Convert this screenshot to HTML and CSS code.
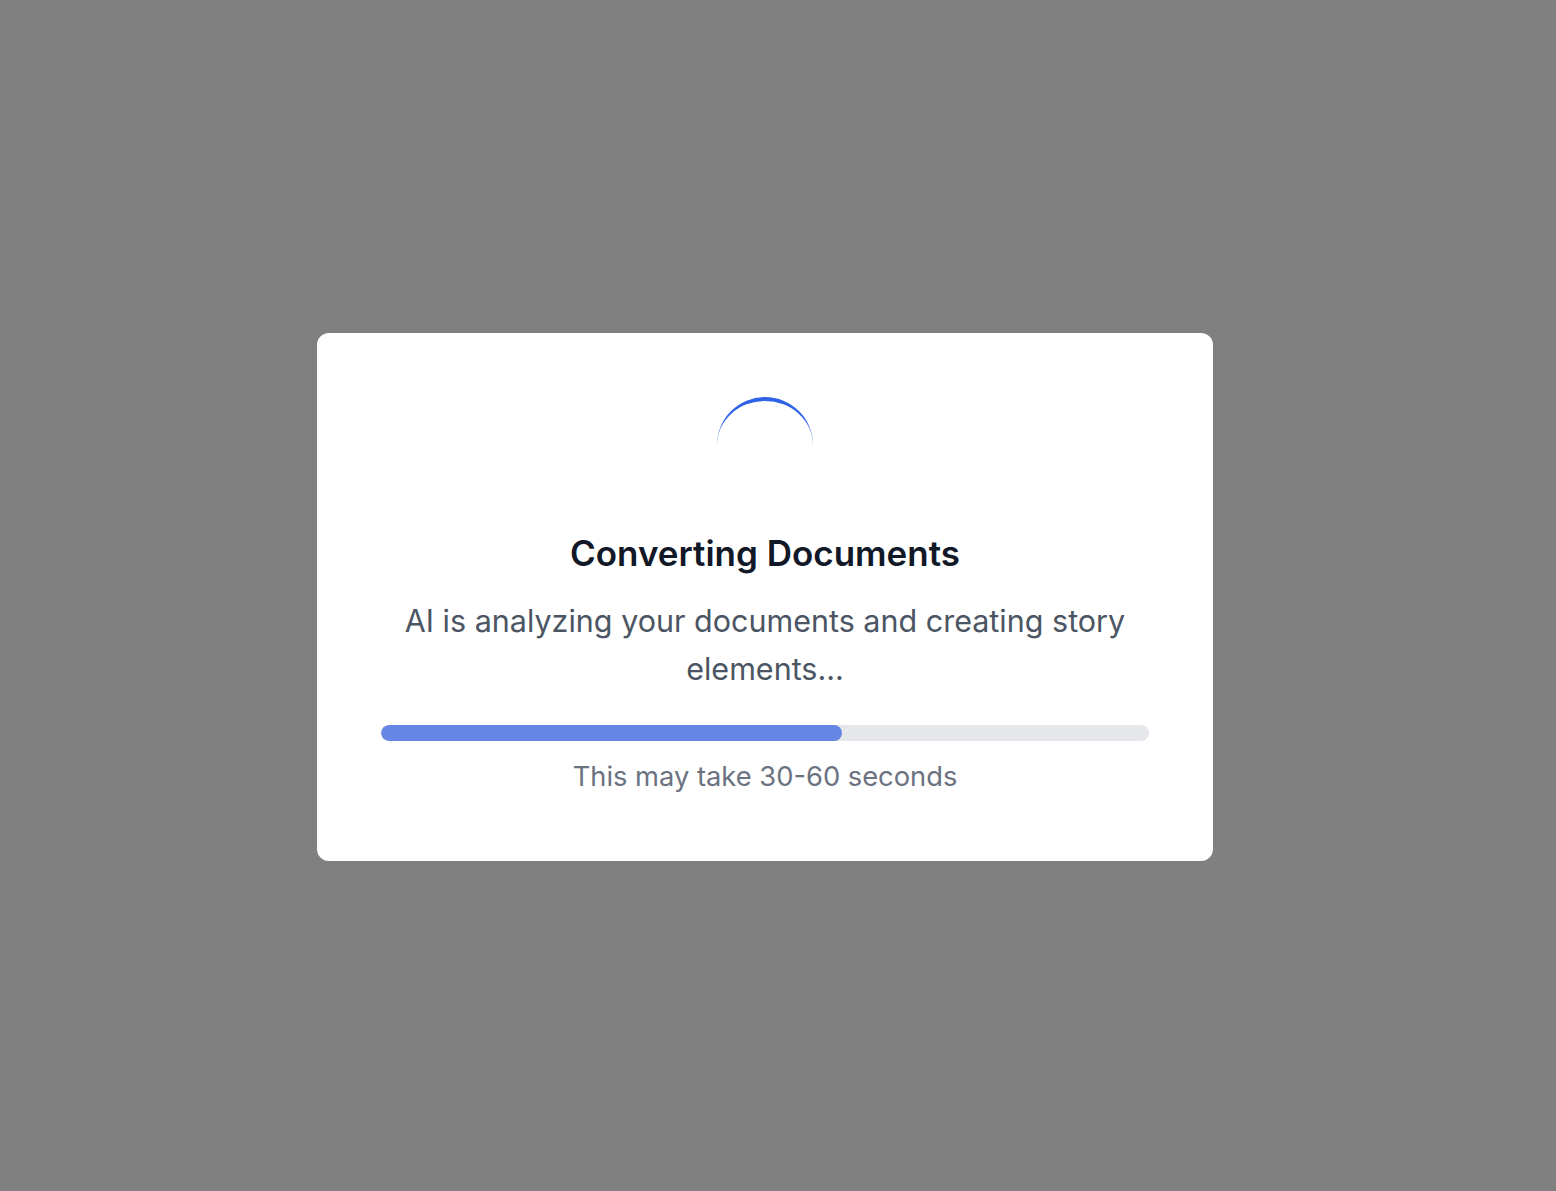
FILE: index.html
```html
<!DOCTYPE html>
<html lang="en">
<head>
  <meta charset="UTF-8" />
  <meta name="viewport" content="width=device-width, initial-scale=1.0"/>
  <title>Converting Documents</title>
  <link rel="stylesheet" href="styles.css">
</head>
<body>

<div class="overlay">
  <div class="modal">
    <div class="spinner"></div>
    <h2 class="modal-title">Converting Documents</h2>
    <p class="modal-text">AI is analyzing your documents and creating story elements...</p>
    <div class="progress">
      <div class="progress-fill" style="width: 60%"></div>
    </div>
    <p class="modal-hint">This may take 30-60 seconds</p>
  </div>
</div>

</body>
</html>
```

FILE: styles.css
```css
* {
  box-sizing: border-box;
}

body {
  margin: 0;
  font-family: Inter, 'Noto Sans', sans-serif;
  background: #7f807f;
}

.overlay {
  min-height: 100vh;
  display: flex;
  align-items: center;
  justify-content: center;
  padding-right: 26px;
  padding-top: 2px;
}

.modal {
  width: 896px;
  background: #fff;
  border-radius: 12px;
  padding: 64px;
  text-align: center;
}

.spinner {
  width: 96px;
  height: 96px;
  margin: 0 auto 32px;
  border-radius: 50%;
  border-top: 4px solid #2f62e6;
}

.modal-title {
  margin: 0 0 16px;
  font-size: 35px;
  line-height: 56px;
  font-weight: 600;
  color: #111827;
}

.modal-text {
  margin: 0 0 32px;
  font-size: 30.5px;
  line-height: 48px;
  color: #4b5563;
}

.progress {
  height: 16px;
  background: #e5e7eb;
  border-radius: 8px;
  overflow: hidden;
}

.progress-fill {
  height: 100%;
  background: #6586e4;
  border-radius: 8px;
}

.modal-hint {
  margin: 16px 0 0;
  font-size: 27.3px;
  line-height: 40px;
  color: #6b7280;
}
```
